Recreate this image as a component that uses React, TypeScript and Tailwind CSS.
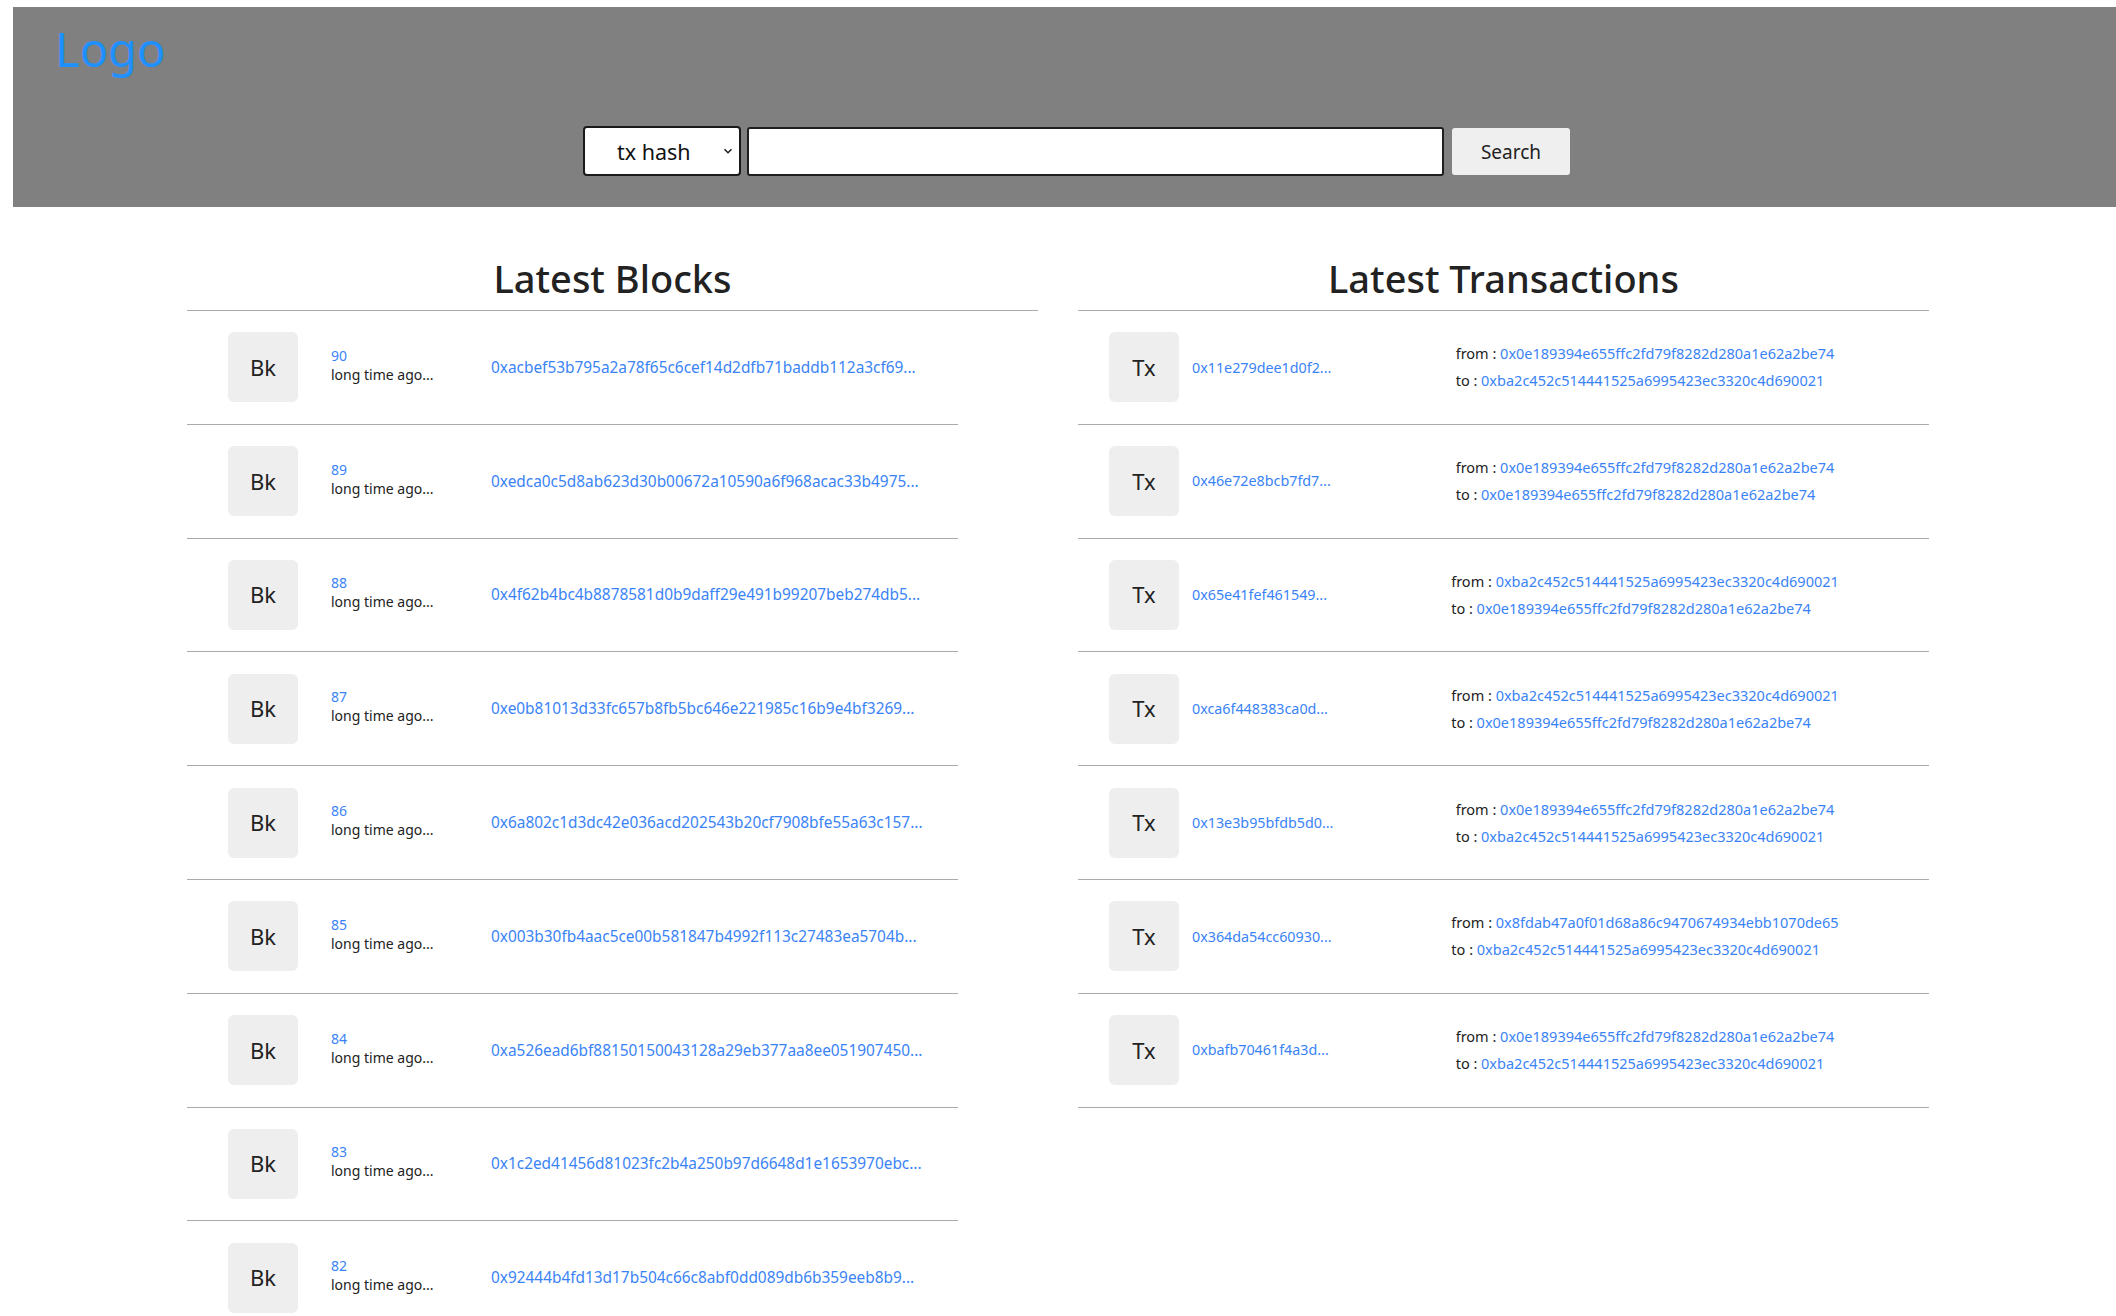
import React from "react";

const blue = "text-[#3a83f7]";

const blocks: [string, string][] = [
  ["90", "0xacbef53b795a2a78f65c6cef14d2dfb71baddb112a3cf69..."],
  ["89", "0xedca0c5d8ab623d30b00672a10590a6f968acac33b4975..."],
  ["88", "0x4f62b4bc4b8878581d0b9daff29e491b99207beb274db5..."],
  ["87", "0xe0b81013d33fc657b8fb5bc646e221985c16b9e4bf3269..."],
  ["86", "0x6a802c1d3dc42e036acd202543b20cf7908bfe55a63c157..."],
  ["85", "0x003b30fb4aac5ce00b581847b4992f113c27483ea5704b..."],
  ["84", "0xa526ead6bf88150150043128a29eb377aa8ee051907450..."],
  ["83", "0x1c2ed41456d81023fc2b4a250b97d6648d1e1653970ebc..."],
  ["82", "0x92444b4fd13d17b504c66c8abf0dd089db6b359eeb8b9..."],
];

const A = "0x0e189394e655ffc2fd79f8282d280a1e62a2be74";
const B = "0xba2c452c514441525a6995423ec3320c4d690021";
const C = "0x8fdab47a0f01d68a86c9470674934ebb1070de65";

const txs: [string, string, string][] = [
  ["0x11e279dee1d0f2...", A, B],
  ["0x46e72e8bcb7fd7...", A, A],
  ["0x65e41fef461549...", B, A],
  ["0xca6f448383ca0d...", B, A],
  ["0x13e3b95bfdb5d0...", A, B],
  ["0x364da54cc60930...", C, B],
  ["0xbafb70461f4a3d...", A, B],
];

function Badge({ label }: { label: string }) {
  return (
    <div className="flex h-[70px] w-[70px] shrink-0 items-center justify-center rounded-[6px] bg-[#eeeeee] text-[22px] text-[#222]">
      {label}
    </div>
  );
}

export default function App() {
  return (
    <div className="min-h-screen bg-white font-['Noto_Sans',sans-serif] text-[#222]">
      <header className="ml-[13px] mt-[7px] flex h-[200px] flex-col bg-[#808080]">
        <div className="pl-[42px] pt-[18px] text-[47px] leading-[48px] text-[#1e90ff]">Logo</div>
        <div className="mt-[53px] flex items-center justify-center pl-[24px]">
          <div className="relative">
            <select className="h-[50px] w-[158px] appearance-none rounded-[4px] border-2 border-[#1a1a1a] bg-white pl-[32px] pt-[3px] text-[21.5px] text-[#111] outline-none">
              <option>tx hash</option>
              <option>block</option>
              <option>address</option>
            </select>
            <svg
              className="pointer-events-none absolute right-[8px] top-[21px]"
              width="10"
              height="8"
              viewBox="0 0 10 8"
              fill="none"
              stroke="#222"
              strokeWidth="1.6"
            >
              <path d="M1.5 2.2 L5 5.7 L8.5 2.2" />
            </svg>
          </div>
          <input
            className="ml-[6px] h-[49px] w-[697px] rounded-[3px] border-2 border-[#1f1f1f] bg-white px-2 text-[18px] outline-none"
            type="text"
          />
          <button className="ml-[8px] h-[47px] w-[118px] rounded-[3px] bg-[#efefef] pt-[3px] text-[19px] text-[#222]">
            Search
          </button>
        </div>
      </header>

      <main className="flex justify-center gap-[40px] pt-[47px]">
        <section className="w-[851px]">
          <h2 className="border-b border-[#aaaaaa] pb-[8px] text-center text-[38px] font-medium leading-[48px] text-[#222]">
            Latest Blocks
          </h2>
          {blocks.map(([n, h]) => (
            <div
              key={n}
              className="box-border flex h-[113.8px] w-[771px] items-center border-b border-[#aaaaaa] pl-[41px]"
            >
              <Badge label="Bk" />
              <div className="mb-[5px] ml-[33px] w-[160px] text-[14px] leading-[19px]">
                <div className={blue}>{n}</div>
                <div>long time ago...</div>
              </div>
              <div className={`text-[15.4px] ${blue}`}>{h}</div>
            </div>
          ))}
        </section>

        <section className="w-[851px]">
          <h2 className="border-b border-[#aaaaaa] pb-[8px] text-center text-[38px] font-medium leading-[48px] text-[#222]">
            Latest Transactions
          </h2>
          {txs.map(([h, f, t]) => (
            <div
              key={h}
              className="box-border flex h-[113.8px] items-center border-b border-[#aaaaaa] px-[31px]"
            >
              <Badge label="Tx" />
              <div className={`ml-[13px] w-[200px] text-[14.3px] ${blue}`}>{h}</div>
              <div className="flex flex-1 justify-center">
                <div className="text-[14.5px] leading-[27px]">
                  <div>
                    from : <span className={blue}>{f}</span>
                  </div>
                  <div>
                    to : <span className={blue}>{t}</span>
                  </div>
                </div>
              </div>
            </div>
          ))}
        </section>
      </main>
    </div>
  );
}
